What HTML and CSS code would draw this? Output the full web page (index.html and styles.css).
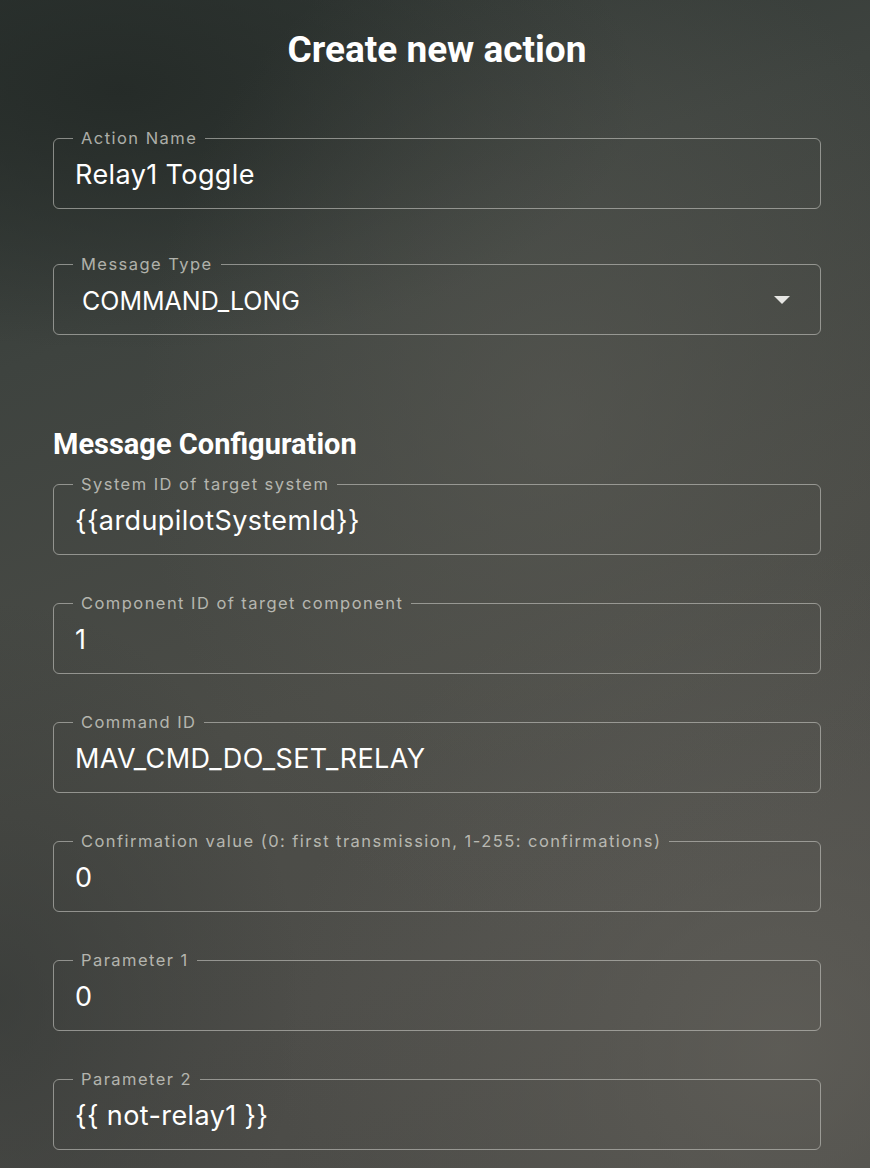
FILE: index.html
```html
<!DOCTYPE html>
<html>
<head>
<meta charset="utf-8">
<link rel="stylesheet" href="styles.css">
</head>
<body>
<div class="page">
  <h1 class="title">Create new action</h1>
  <form class="form">
    <fieldset class="field">
      <legend class="label">Action Name</legend>
      <div class="value">Relay1 Toggle</div>
    </fieldset>
    <fieldset class="field select">
      <legend class="label">Message Type</legend>
      <div class="value sel">COMMAND_LONG</div>
      <span class="caret"></span>
    </fieldset>
    <h2 class="section">Message Configuration</h2>
    <div class="group">
      <fieldset class="field">
        <legend class="label">System ID of target system</legend>
        <div class="value">{{ardupilotSystemId}}</div>
      </fieldset>
      <fieldset class="field">
        <legend class="label">Component ID of target component</legend>
        <div class="value">1</div>
      </fieldset>
      <fieldset class="field">
        <legend class="label">Command ID</legend>
        <div class="value">MAV_CMD_DO_SET_RELAY</div>
      </fieldset>
      <fieldset class="field">
        <legend class="label">Confirmation value (0: first transmission, 1-255: confirmations)</legend>
        <div class="value">0</div>
      </fieldset>
      <fieldset class="field">
        <legend class="label">Parameter 1</legend>
        <div class="value">0</div>
      </fieldset>
      <fieldset class="field">
        <legend class="label">Parameter 2</legend>
        <div class="value">{{ not-relay1 }}</div>
      </fieldset>
    </div>
  </form>
</div>
</body>
</html>
```

FILE: styles.css
```css
html, body {
  margin: 0;
  padding: 0;
  height: 100%;
}
body {
  overflow: hidden;
  background:
    radial-gradient(ellipse 420px 520px at 560px 420px, rgba(92,92,86,0.55), rgba(92,92,86,0) 100%),
    radial-gradient(ellipse 500px 500px at 780px 1050px, rgba(100,98,92,0.7), rgba(100,98,92,0) 100%),
    radial-gradient(ellipse 520px 260px at 120px 90px, rgba(36,42,39,0.9), rgba(36,42,39,0) 100%),
    radial-gradient(ellipse 300px 400px at 0px 1000px, rgba(50,54,52,0.6), rgba(50,54,52,0) 100%),
    linear-gradient(160deg, #2d3431 0%, #3e433f 25%, #4b4c47 55%, #4d4d49 75%, #4a4a46 100%);
  font-family: Inter, "Noto Sans", sans-serif;
  color: #fff;
}
.page {
  padding: 0 49px 0 53px;
}
.title {
  margin: 0;
  padding-top: 28px;
  height: 46px;
  font-family: Roboto, sans-serif;
  font-weight: 700;
  font-size: 37px;
  line-height: 44px;
  text-align: center;
  color: #fff;
}
.form {
  margin-top: 54px;
  display: flex;
  flex-direction: column;
}
.field {
  position: relative;
  margin: 0;
  padding: 0 20px 0 21px;
  border: 1px solid rgba(200,200,195,0.6);
  border-radius: 6px;
  height: 81px;
  box-sizing: border-box;
  min-width: 0;
}
.field + .field {
  margin-top: 45px;
}
.label {
  margin-left: -2px;
  padding: 0 8px;
  font-family: Inter, sans-serif;
  font-size: 16.5px;
  line-height: 20px;
  color: rgba(225,225,220,0.72);
  letter-spacing: 1.45px;
  white-space: nowrap;
}
.value {
  margin-top: 11px;
  font-size: 27px;
  line-height: 32px;
  letter-spacing: 0.4px;
  color: #fff;
  white-space: nowrap;
}
.sel {
  padding-left: 7px;
  font-size: 25px;
  letter-spacing: 0;
}
.caret {
  position: absolute;
  right: 30px;
  top: 22px;
  width: 0;
  height: 0;
  border-left: 8px solid transparent;
  border-right: 8px solid transparent;
  border-top: 8px solid #e6e6e3;
}
.section {
  margin: 92px 0 0;
  font-family: Roboto, sans-serif;
  font-weight: 700;
  font-size: 29px;
  line-height: 34px;
  color: #fff;
}
.group {
  margin-top: 13px;
  display: flex;
  flex-direction: column;
}
.group .field + .field {
  margin-top: 38px;
}
```
